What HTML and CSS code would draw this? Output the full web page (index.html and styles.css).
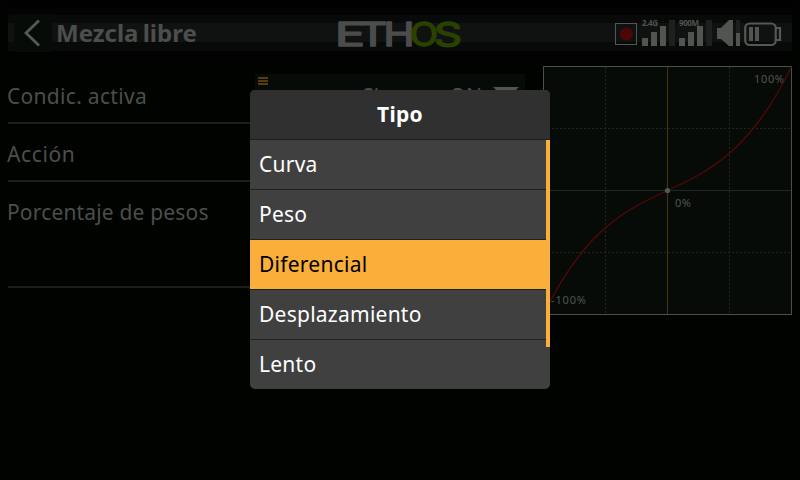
FILE: index.html
```html
<!DOCTYPE html>
<html lang="es">
<head>
<meta charset="utf-8">
<title>Mezcla libre</title>
<link rel="stylesheet" href="styles.css">
</head>
<body>
<header class="topbar">
  <button class="back" aria-label="Atrás"><svg width="38" height="38"><path d="M25 6.500L12 19L25 31.500"/></svg></button>
  <h1>Mezcla libre</h1>
  <svg class="logo" width="126" height="36" aria-label="ETHOS">
    <g class="logo-eth"><text x="-2" y="31.500" textLength="30" lengthAdjust="spacingAndGlyphs">E</text><text x="22" y="31.500" textLength="28" lengthAdjust="spacingAndGlyphs">T</text><text x="46.500" y="31.500" textLength="31" lengthAdjust="spacingAndGlyphs">H</text></g>
    <g class="logo-os"><text x="73" y="31.500" textLength="28" lengthAdjust="spacingAndGlyphs">O</text><text x="97" y="31.500" textLength="28" lengthAdjust="spacingAndGlyphs">S</text></g>
  </svg>
  <svg class="status" width="170" height="38">
    <rect class="frame" x=".5" y="9.500" width="21" height="21"/>
    <circle class="record" cx="11.500" cy="20" r="6.500"/>
    <text x="27" y="12" textLength="16">2.4G</text>
    <path class="solid" d="M27 24h6v8h-6zM36 18h6v14h-6zM45 12h6v20h-6z"/>
    <path class="off" d="M54 6h6v26h-6zM91 6h6v26h-6zM121 6h4v13h-4z"/>
    <text x="64" y="12" textLength="20">900M</text>
    <path class="solid" d="M64 24h6v8h-6zM73 18h6v14h-6zM82 12h6v20h-6z"/>
    <path class="solid" d="M102 14h4L114 6h4v26h-4L106 25h-4zM121 19h4v13h-4z"/>
    <rect class="battery" x="130.200" y="9.500" width="30.500" height="21.500" rx="4.500"/>
    <path class="terminal" d="M161 14h4v12h-4"/>
    <path class="solid" d="M134 13h4v14h-4zM140 13h4v14h-4z"/>
  </svg>
</header>
<main>
  <section class="form">
    <div class="row"><span class="label condition">Condic. activa</span>
      <div class="select"><svg class="burger" width="10" height="8"><path d="M0 1h10M0 4h10M0 7h10"/></svg><span class="value">Siempre ON</span><svg class="caret" width="26" height="13"><path d="M0 0h26L13 13z"/></svg></div>
    </div>
    <div class="row"><span class="label action">Acción</span></div>
    <div class="row tall"><span class="label weights">Porcentaje de pesos</span></div>
  </section>
  <svg class="chart" width="249" height="249">
    <rect class="plot" x=".5" y=".5" width="248" height="248"/>
    <path class="grid" d="M62.500 1V248M186.500 1V248M1 62.500H248M1 186.500H248"/>
    <path class="axis" d="M1 124.500H248"/>
    <path class="cursor" d="M124.500 1V248"/>
    <path class="curve" d="M.5 248.500C41.800 163.100 83.200 143.800 124.500 124.500S207.200 85.900 248.500 .5"/>
    <circle cx="124.500" cy="124.500" r="2.600"/>
    <text x="211" y="17" textLength="30">100%</text>
    <text x="132" y="141" textLength="16">0%</text>
    <text x="8" y="238" textLength="35">-100%</text>
  </svg>
</main>
<div class="dialog" role="dialog">
  <h2>Tipo</h2>
  <ul>
    <li>Curva</li>
    <li>Peso</li>
    <li class="selected">Diferencial</li>
    <li>Desplazamiento</li>
    <li>Lento</li>
  </ul>
  <div class="scrollbar"></div>
</div>
</body>
</html>
```
FILE: styles.css
```css
* { box-sizing: border-box; }
body {
  margin: 0;
  width: 800px;
  height: 480px;
  overflow: hidden;
  background: #000300;
  color: #4b4f4b;
  font-family: "Noto Sans", "Open Sans", sans-serif;
}
svg { display: block; }
.topbar {
  display: grid;
  grid-template-columns: 38px 285px 1fr 170px;
  align-items: start;
  height: 66px;
  padding: 14px 15px 0 14px;
  background: linear-gradient(#000100 8px, #020302 8px 15px, #070a08 15px 23px, #101211 23px 42px, #070a08 42px 51px, #000100 51px 58px, #000300 58px) 8px 0 / 784px 66px no-repeat;
}
.back { width: 38px; height: 38px; padding: 0; border: 0; background: #070b08; }
.back path { fill: none; stroke: #555955; stroke-width: 2.8; }
h1 { margin: 0 0 0 4px; font-size: 24px; line-height: 38px; font-weight: 700; letter-spacing: 0; word-spacing: -2px; }
.logo { overflow: visible; }
.logo text { font: 400 33px Inter, sans-serif; stroke-width: 1.5; stroke-linejoin: round; }
.logo-eth { fill: #4c4c4c; stroke: #4c4c4c; }
.logo-os { fill: #2a4200; stroke: #2a4200; }
.status .frame { fill: none; stroke: #535753; }
.record { fill: #4c0605; }
.status text { fill: #4f534f; font-size: 8px; font-weight: 700; }
.solid { fill: #505550; }
.off { fill: #1c211d; }
.battery, .terminal { fill: none; stroke: #535853; stroke-width: 2.2; }
main { display: grid; grid-template-columns: 517px 249px; column-gap: 18px; padding: 0 8px; }
.row { display: flex; justify-content: space-between; height: 58px; border-bottom: 2px solid #1b201c; }
.row.tall { height: 106px; }
.label { font-size: 21px; line-height: 60px; height: 56px; margin-left: -1px; white-space: nowrap; }
.condition { letter-spacing: .3px; }
.action { letter-spacing: .6px; }
.weights { letter-spacing: .17px; }
.select { display: flex; align-items: center; width: 270px; height: 42px; margin-top: 8px; padding: 0 6px 0 3px; background: #070b08; }
.burger { align-self: flex-start; margin-top: 3px; }
.burger path { stroke: #593a0b; stroke-width: 2; }
.value { margin-left: auto; margin-right: 11px; padding-top: 1px; font-size: 21px; letter-spacing: .05px; }
.caret { margin-bottom: 4px; fill: #505550; }
.plot { fill: #070b08; stroke: #4b504c; }
.grid { fill: none; stroke: #222723; stroke-dasharray: 2 2; }
.axis { stroke: #222723; }
.cursor { stroke: #49320e; }
.curve { fill: none; stroke: #580706; stroke-width: 1.2; }
.chart circle { fill: #535853; }
.chart text { fill: #505450; font-size: 11px; }
.dialog {
  position: absolute;
  left: 250px;
  top: 90px;
  width: 300px;
  height: 299px;
  overflow: hidden;
  border-radius: 5px;
  background: #404040;
  color: #fff;
}
h2 { margin: 0; height: 50px; border-bottom: 1px solid #202020; background: #303030; font-size: 21px; line-height: 48px; text-align: center; letter-spacing: .3px; }
ul { margin: 0; padding: 0; list-style: none; }
li { height: 50px; padding-left: 9px; border-bottom: 1px solid #202020; font-size: 21px; line-height: 48px; letter-spacing: .25px; }
.selected { background: #f9af39; color: #000; }
.scrollbar { position: absolute; right: 0; top: 50px; width: 4px; height: 207px; background: #f9af39; }
```
